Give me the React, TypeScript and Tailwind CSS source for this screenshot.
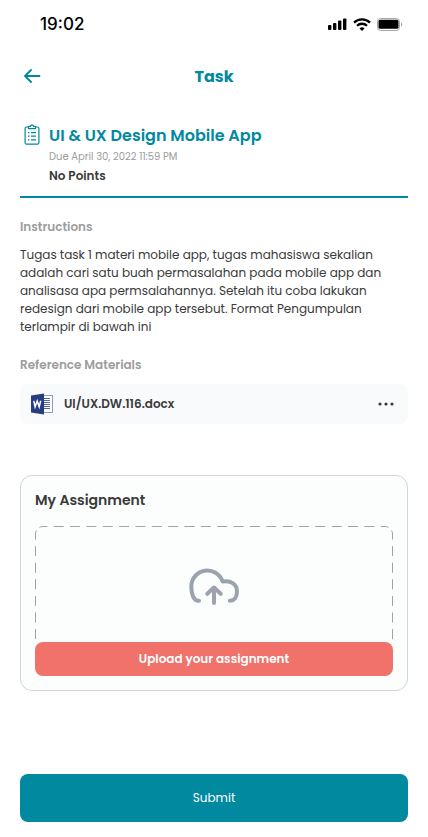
import React from "react";

function StatusBar() {
  return (
    <div className="flex h-12 items-center justify-between pl-5 pr-1 text-black">
      <span className="font-[Inter,sans-serif] text-[17px] leading-6 font-medium">19:02</span>
      <div className="flex items-center gap-1.5">
        <svg width="19" height="12" viewBox="0 0 19 12" fill="currentColor" aria-hidden="true">
          <rect x="0" y="7" width="3.4" height="5" rx="0.9" />
          <rect x="5" y="5" width="3.4" height="7" rx="0.9" />
          <rect x="10" y="2.6" width="3.4" height="9.4" rx="0.9" />
          <rect x="15" y="0.4" width="3.4" height="11.6" rx="0.9" />
        </svg>
        <svg width="18" height="13" viewBox="0 0 18 13" fill="none" stroke="currentColor" strokeWidth="2.3" aria-hidden="true">
          <path d="M1 4.600a11.400 11.400 0 0 1 16 0" />
          <path d="M4 7.800a7.100 7.100 0 0 1 10 0" />
          <path d="M9 13 6.500 10.500a3.600 3.600 0 0 1 5 0Z" fill="currentColor" stroke="none" />
        </svg>
        <svg width="27" height="13" viewBox="0 0 27 13" fill="none" aria-hidden="true">
          <rect x="0.5" y="0.5" width="22" height="12" rx="3" stroke="#a6a6a6" />
          <rect x="1.500" y="1.800" width="20" height="9" rx="1.600" fill="#000" />
          <path d="M24 4.500v4c.8-.3 1.300-1.100 1.300-2s-.5-1.700-1.300-2Z" fill="#a6a6a6" />
        </svg>
      </div>
    </div>
  );
}

function ClipboardIcon() {
  return (
    <svg width="17" height="22" viewBox="0 0 17 22" fill="none" stroke="currentColor" strokeWidth="1.2" strokeLinejoin="round" aria-hidden="true">
      <path d="M4.500 3H2.600A1.500 1.500 0 0 0 1.100 4.500v14.200a1.500 1.500 0 0 0 1.500 1.500h10.800a1.500 1.500 0 0 0 1.500-1.500V4.500A1.500 1.500 0 0 0 13.400 3h-1.900" />
      <path d="M4.500 2.300h2a1.500 1.500 0 0 1 3 0h2v2.400h-7Z" />
      <path d="M4 8.600h1.400M4 12.200h1.400M4 15.800h1.400M7 8.600h5M7 12.200h5M7 15.800h5" strokeWidth="1.300" />
    </svg>
  );
}

function WordIcon() {
  return (
    <svg width="22" height="22" viewBox="0 0 22 22" aria-hidden="true">
      <rect x="11" y="2.500" width="10.500" height="17" fill="#fff" stroke="#8c9bc9" />
      <path d="M12 5.500h7M12 7.500h7M12 9.500h7M12 11.500h7M12 13.500h7M12 15.500h7" stroke="#5365a3" />
      <path d="M0 2.500 13 .5v21L0 19.500Z" fill="#283c82" />
      <path d="m2.800 7.800 1.300 6L6.200 8l2 5.800L9.700 7.800" fill="none" stroke="#fff" strokeWidth="1.500" />
    </svg>
  );
}

function UploadCloudIcon() {
  return (
    <svg width="50" height="38" viewBox="0 0 50 38" fill="none" stroke="#9ca3af" strokeWidth="4" strokeLinecap="round" strokeLinejoin="round" aria-hidden="true">
      <path d="M10 32.700H9C4.200 32.700 2.300 25 2.300 18.500A16 16 0 0 1 33.500 13.500C41.500 12 48 16 48 23.500 48 29 45 32.700 40.800 32.700" />
      <path d="M25 35V19.500M18.300 25.800 25 19.500l6.700 6.300" />
    </svg>
  );
}

function DashedOutline() {
  return (
    <svg className="absolute top-0 left-0 h-[120px] w-full" fill="none" stroke="#9ca3af" aria-hidden="true">
      <line x1="8" x2="97.800%" y1="0.5" y2="0.5" strokeDasharray="10 6.350" strokeDashoffset="5.650" />
      <line x1="0.5" x2="0.5" y1="8" y2="114" strokeDasharray="10 6.600" strokeDashoffset="4.500" />
      <path d="M.5 8Q.5 6 1.400 4.500M8 .5Q6 .5 4.500 1.400" />
      <svg x="100%" overflow="visible">
        <line x1="-0.5" x2="-0.5" y1="8" y2="114" strokeDasharray="10 6.600" strokeDashoffset="4.500" />
        <path d="M-.5 8Q-.5 6-1.400 4.500M-8 .5Q-6 .5-4.500 1.400" />
      </svg>
    </svg>
  );
}

export default function App() {
  return (
    <main className="min-h-screen bg-white px-5 pb-4 font-[Poppins,Inter,sans-serif] text-[#3a3a3a]">
      <StatusBar />

      <header className="grid h-14 grid-cols-3 items-center text-[#00899f]">
        <button type="button" aria-label="Back" className="flex h-8 w-6 items-center justify-center">
          <svg width="17" height="16" viewBox="0 0 17 16" fill="none" stroke="currentColor" strokeWidth="1.800" strokeLinecap="round" strokeLinejoin="round" aria-hidden="true">
            <path d="M15.500 8H1M7 2 1 8l6 6" />
          </svg>
        </button>
        <h1 className="pt-0.5 text-center text-base font-bold">Task</h1>
      </header>

      <section className="flex gap-2 border-b-2 border-[#00899f] pt-5 pb-2 pl-1">
        <div className="w-[17px] shrink-0 text-[#00899f]">
          <ClipboardIcon />
        </div>
        <div>
          <h2 className="text-base leading-6 font-semibold text-[#00899f]">UI &amp; UX Design Mobile App</h2>
          <p className="text-[10px] leading-[18px] text-[#9d9d9d]">Due April 30, 2022 11:59 PM</p>
          <p className="pb-0.5 text-xs leading-5 font-semibold">No Points</p>
        </div>
      </section>

      <section className="pt-5">
        <h3 className="text-xs leading-[18px] font-semibold text-[#9d9d9d]">Instructions</h3>
        <p className="mt-2.5 text-xs leading-[18px]">
          Tugas task 1 materi mobile app, tugas mahasiswa sekalian adalah cari satu buah permasalahan pada mobile app dan
          analisasa apa permsalahannya. Setelah itu coba lakukan redesign dari mobile app tersebut. Format Pengumpulan
          terlampir di bawah ini
        </p>
      </section>

      <section className="pt-5">
        <h3 className="text-xs leading-[18px] font-semibold text-[#9d9d9d]">Reference Materials</h3>
        <div className="mt-2.5 flex h-10 items-center gap-[11px] rounded-lg bg-[#f9fafc] pr-3 pl-[11px]">
          <WordIcon />
          <span className="flex-1 text-xs font-semibold">UI/UX.DW.116.docx</span>
          <button type="button" aria-label="More options" className="flex h-6 w-5 items-center justify-center">
            <svg width="16" height="4" viewBox="0 0 16 4" fill="currentColor" aria-hidden="true">
              <circle cx="2" cy="2" r="1.600" />
              <circle cx="8" cy="2" r="1.600" />
              <circle cx="14" cy="2" r="1.600" />
            </svg>
          </button>
        </div>
      </section>

      <section className="mt-[51px] rounded-xl border border-[#d1d5db] bg-[#fbfefd] p-3.5">
        <h2 className="text-sm leading-5 font-semibold">My Assignment</h2>
        <div className="relative mt-4">
          <DashedOutline />
          <div className="flex h-[116px] items-center justify-center pt-1.5">
            <UploadCloudIcon />
          </div>
          <button type="button" className="h-[34px] w-full rounded-lg bg-[#f0726a] text-xs font-semibold text-white">
            Upload your assignment
          </button>
        </div>
      </section>

      <button type="button" className="mt-[83px] h-12 w-full rounded-lg bg-[#00899f] text-xs text-white">
        Submit
      </button>
    </main>
  );
}
